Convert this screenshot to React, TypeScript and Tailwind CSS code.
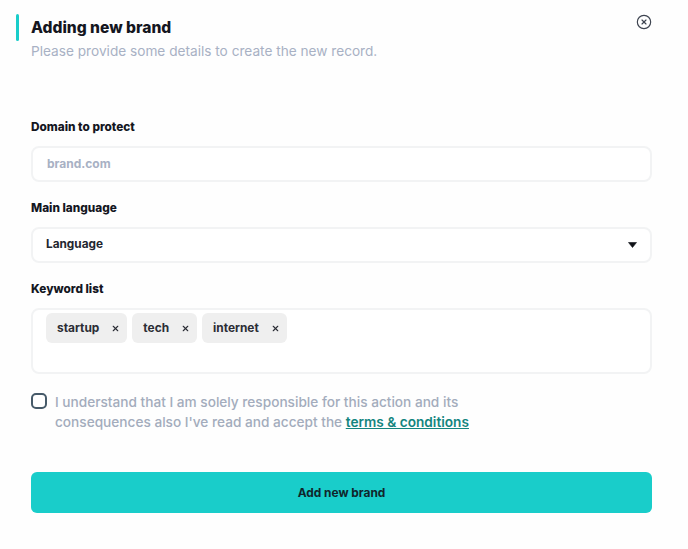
import { CircleX, X } from 'lucide-react';

const keywords = ['startup', 'tech', 'internet'];

function Label({ children }: { children: string }) {
  return <div className="h-[20px] text-[11.8px] leading-[20px] font-extrabold text-[#14161f]">{children}</div>;
}

export default function App() {
  return (
    <div className="w-[688px] h-[549px] bg-[#fefefe] overflow-hidden font-['Inter',sans-serif]">
      <div className="flex pl-[16px] pr-[36px] pt-[14px]">
        <div className="w-[3px] h-[27px] rounded-full bg-[#19cdca]" />
        <div className="ml-[12px] flex-1">
          <h1 className="h-[27px] text-[15.6px] leading-[28px] font-extrabold text-[#14161f]">Adding new brand</h1>
          <p className="text-[13.65px] leading-[20px] text-[#a8b1c4]">Please provide some details to create the new record.</p>
        </div>
        <button className="h-[16px] w-[16px]">
          <CircleX className="w-[16px] h-[16px] text-[#3e4450]" strokeWidth={1.75} />
        </button>
      </div>

      <div className="ml-[31px] w-[621px] mt-[56px] flex flex-col">
        <Label>Domain to protect</Label>
        <div className="mt-[9px] h-[36px] px-[14px] flex items-center rounded-[8px] border-2 border-[#f2f3f4] bg-white text-[12px] font-bold text-[#a8b1c4]">
          brand.com
        </div>

        <div className="mt-[16px]"><Label>Main language</Label></div>
        <div className="mt-[9px] h-[36px] pl-[13px] pr-[13px] flex items-center justify-between rounded-[8px] border-2 border-[#f2f3f4] bg-white text-[11.8px] font-bold text-[#23262f]">
          Language
          <svg width="9" height="6" viewBox="0 0 9 6"><path d="M0.5 0.5h8L4.5 5.5z" fill="#0f1117" stroke="#0f1117" strokeLinejoin="round" strokeWidth="0.6" /></svg>
        </div>

        <div className="mt-[16px]"><Label>Keyword list</Label></div>
        <div className="mt-[9px] h-[66px] pl-[13px] pt-[3px] flex items-start gap-[5px] rounded-[8px] border-2 border-[#f2f3f4] bg-white">
          {keywords.map((k) => (
            <span key={k} className="h-[30px] pl-[11px] pr-[7px] flex items-center justify-between gap-[12px] rounded-[6px] bg-[#efefef] text-[11.9px] font-bold text-[#2b2d35]">
              {k}
              <X className="w-[9px] h-[9px] text-[#2b2d35]" strokeWidth={3} />
            </span>
          ))}
        </div>

        <div className="mt-[19px] flex items-start">
          <span className="w-[16px] h-[16px] shrink-0 rounded-[5px] border-2 border-[#465a69] bg-white" />
          <p className="ml-[8px] -mt-[1px] text-[13.65px] leading-[20px] font-medium text-[#a3acbc]">
            I understand that I am solely responsible for this action and its<br />
            consequences also I've read and accept the{' '}
            <a className="font-semibold text-[#13857f] underline">terms &amp; conditions</a>
          </p>
        </div>

        <button className="mt-[40px] h-[41px] w-full rounded-[6px] bg-[#19cdca] text-[11.9px] font-bold text-[#10262b]">
          Add new brand
        </button>
      </div>
    </div>
  );
}
